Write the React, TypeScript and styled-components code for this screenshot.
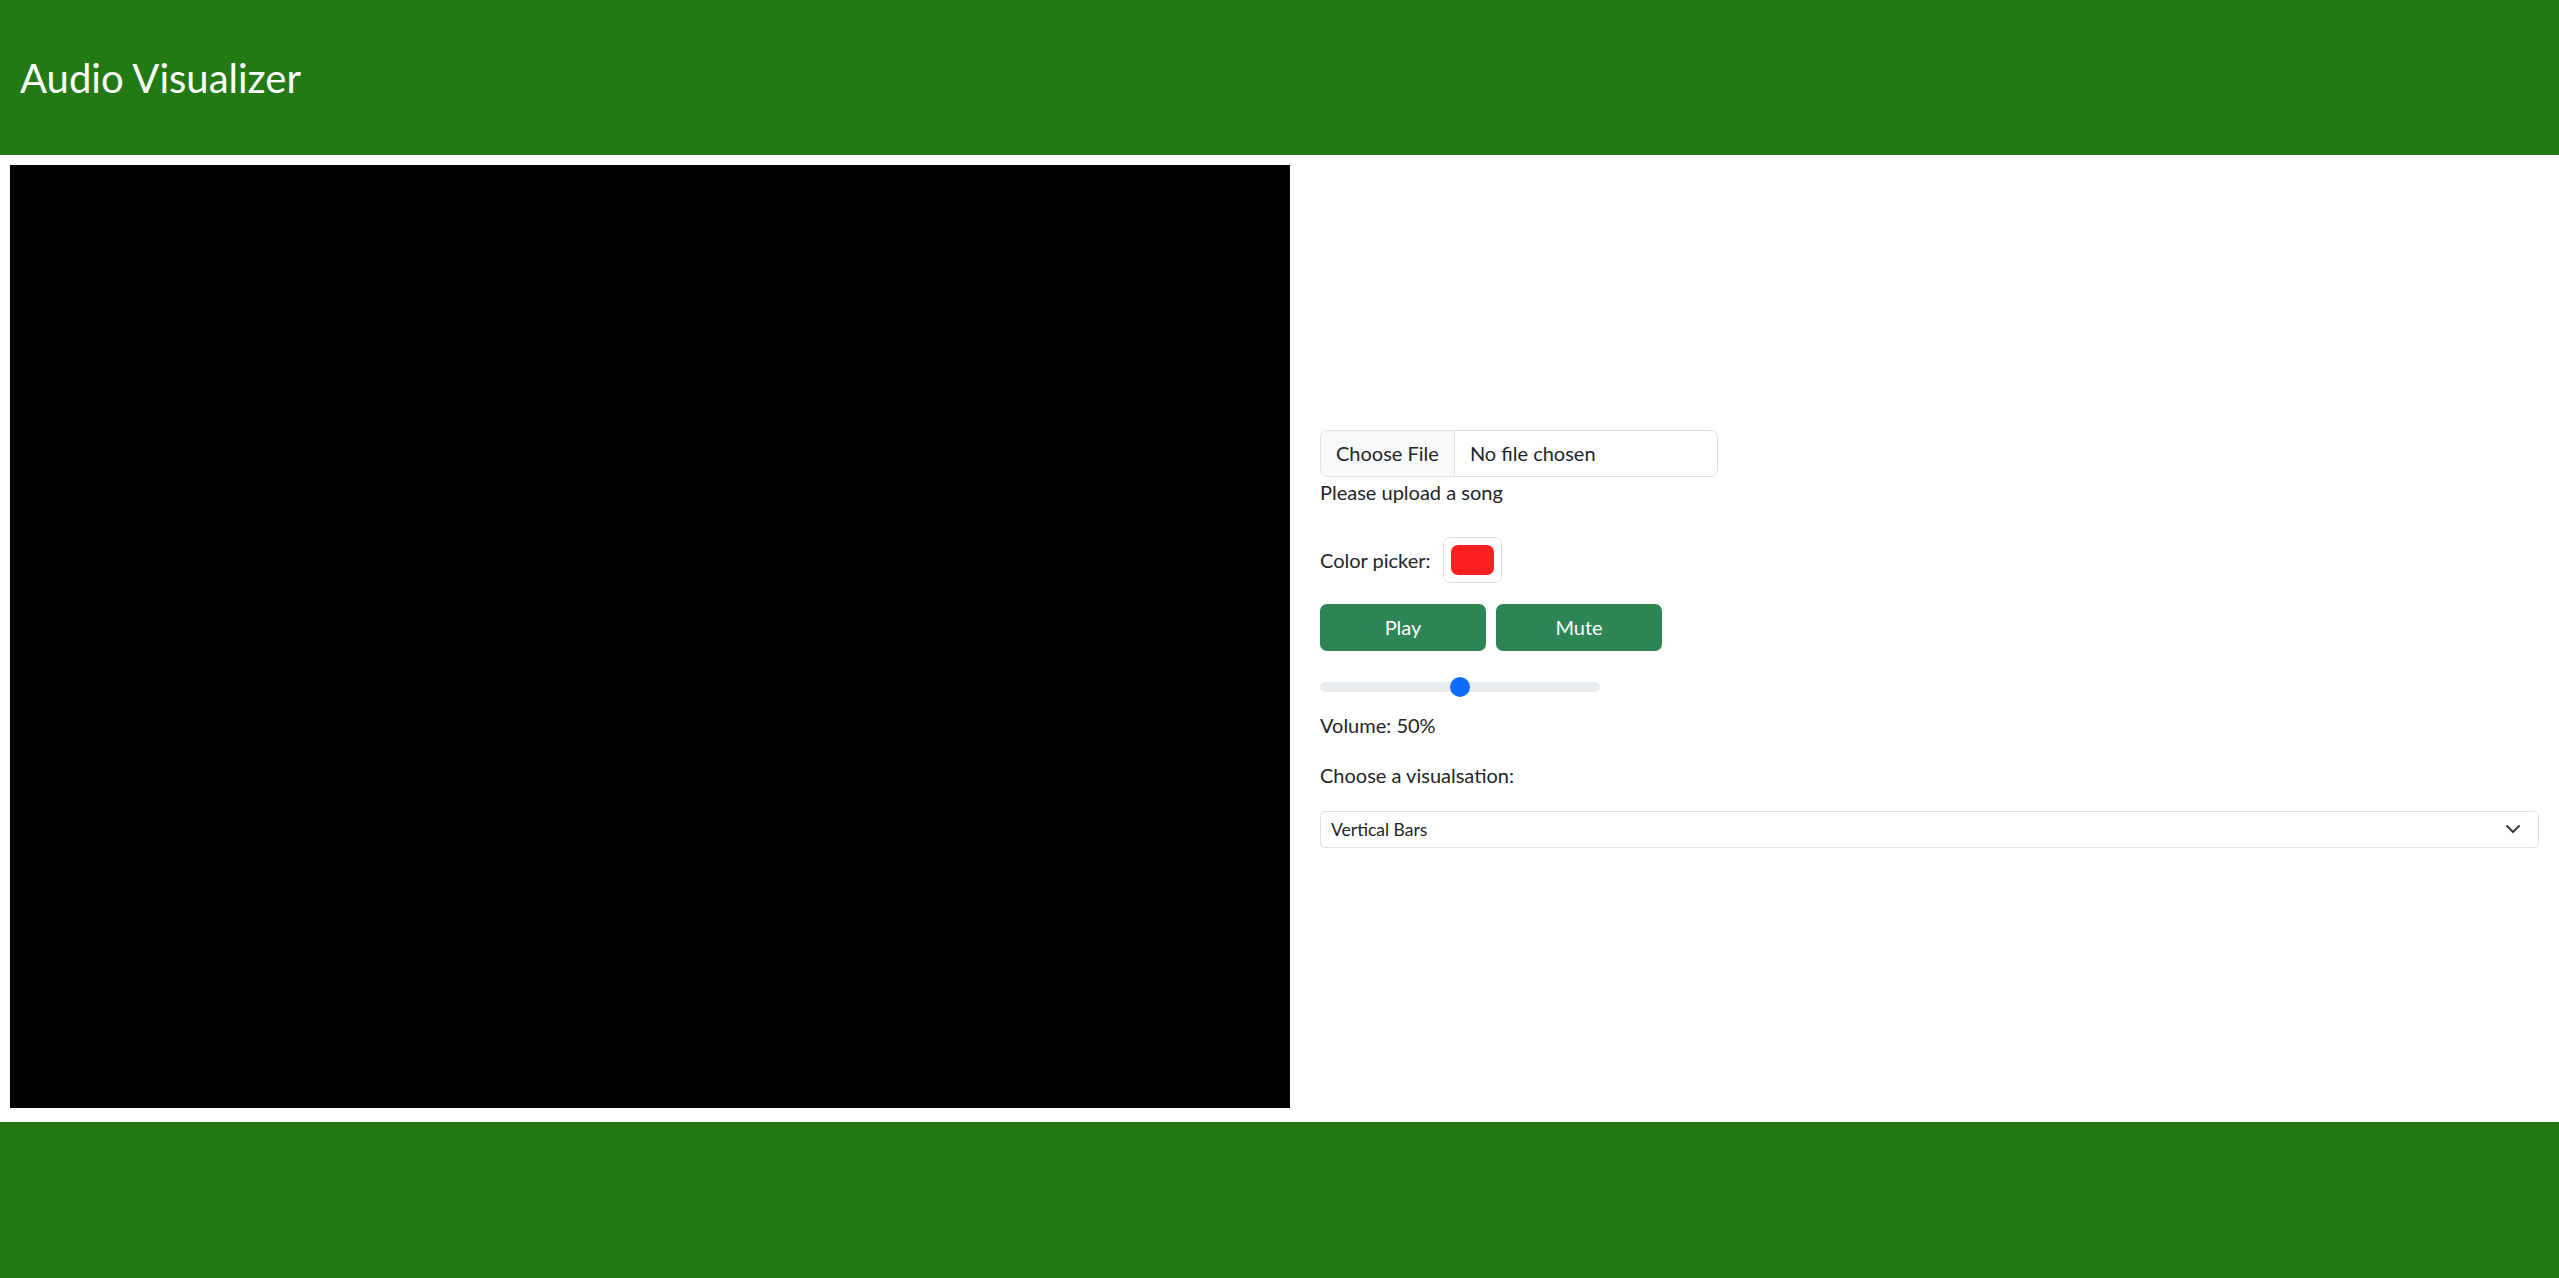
import React, { useState } from 'react';
import styled, { createGlobalStyle } from 'styled-components';

const GlobalStyle = createGlobalStyle`
  html, body {
    margin: 0;
    padding: 0;
    background: #fff;
  }
  body {
    font-family: Lato, 'Noto Sans', sans-serif;
    color: #212529;
    font-size: 20px;
    line-height: 1.5;
  }
  * {
    box-sizing: border-box;
  }
`;

const Page = styled.div`
  display: flex;
  flex-direction: column;
  height: 100vh;
`;

const Header = styled.header`
  height: 155px;
  background-color: #237a14;
  display: flex;
  align-items: center;
  padding-left: 20px;
  flex-shrink: 0;
`;

const Title = styled.h1`
  margin: 0;
  color: #fff;
  font-size: 40px;
  font-weight: 400;
  line-height: 1.2;
`;

const Main = styled.main`
  flex: 1;
  display: flex;
  align-items: flex-start;
  gap: 30px;
  padding: 10px 20px 14px 10px;
`;

const Canvas = styled.div`
  width: 1280px;
  height: 943px;
  background: #000;
  flex-shrink: 0;
`;

const Controls = styled.div`
  flex: 1;
  align-self: center;
  display: flex;
  flex-direction: column;
  align-items: flex-start;
  padding-top: 4px;
`;

const FileBox = styled.label`
  display: flex;
  width: 398px;
  height: 47px;
  border: 1px solid #dee2e6;
  border-radius: 7px;
  overflow: hidden;
  cursor: pointer;
  input {
    display: none;
  }
`;

const FileButton = styled.span`
  display: flex;
  align-items: center;
  padding: 0 15px;
  background: #f8f9fa;
  border-right: 1px solid #dee2e6;
`;

const FileName = styled.span`
  display: flex;
  align-items: center;
  padding: 0 15px;
`;

const Text = styled.div<{ $mb?: number }>`
  line-height: 30px;
  margin-bottom: ${(p) => p.$mb ?? 0}px;
`;

const Row = styled.div<{ $mb?: number; $gap?: number }>`
  display: flex;
  align-items: center;
  gap: ${(p) => p.$gap ?? 10}px;
  margin-bottom: ${(p) => p.$mb ?? 0}px;
`;

const ColorBox = styled.div`
  width: 59px;
  height: 46px;
  border: 1px solid #dee2e6;
  border-radius: 7px;
  padding: 7px;
  display: flex;
`;

const Swatch = styled.div<{ $color: string }>`
  flex: 1;
  background: ${(p) => p.$color};
  border-radius: 7px;
`;

const Button = styled.button`
  width: 166px;
  height: 47px;
  border: none;
  border-radius: 7px;
  background: #2e8555;
  color: #fff;
  font-family: inherit;
  font-size: 20px;
  cursor: pointer;
`;

const Range = styled.input`
  -webkit-appearance: none;
  appearance: none;
  width: 280px;
  height: 20px;
  margin: 0 0 13px;
  background: transparent;
  &::-webkit-slider-runnable-track {
    height: 10px;
    background: #e9ecef;
    border-radius: 10px;
  }
  &::-webkit-slider-thumb {
    -webkit-appearance: none;
    width: 20px;
    height: 20px;
    margin-top: -5px;
    border-radius: 50%;
    background: #0d6efd;
    border: none;
  }
`;

const SelectWrap = styled.div`
  position: relative;
  width: 100%;
  svg {
    position: absolute;
    right: 16px;
    top: 50%;
    transform: translateY(-50%);
    pointer-events: none;
  }
`;

const Select = styled.select`
  -webkit-appearance: none;
  appearance: none;
  width: 100%;
  height: 37px;
  padding: 0 40px 0 10px;
  border: 1px solid #dee2e6;
  border-radius: 5px;
  background: #fff;
  color: #212529;
  font-family: inherit;
  font-size: 17.5px;
`;

const Footer = styled.footer`
  height: 156px;
  background-color: #237a14;
  flex-shrink: 0;
`;

export default function App() {
  const [volume, setVolume] = useState(50);
  const [color] = useState('#f82020');

  return (
    <Page>
      <GlobalStyle />
      <Header>
        <Title>Audio Visualizer</Title>
      </Header>
      <Main>
        <Canvas />
        <Controls>
          <FileBox>
            <input type="file" accept="audio/*" />
            <FileButton>Choose File</FileButton>
            <FileName>No file chosen</FileName>
          </FileBox>
          <Text $mb={30}>Please upload a song</Text>
          <Row $mb={21} $gap={12}>
            <span>Color picker:</span>
            <ColorBox>
              <Swatch $color={color} />
            </ColorBox>
          </Row>
          <Row $mb={26}>
            <Button>Play</Button>
            <Button>Mute</Button>
          </Row>
          <Range
            type="range"
            min={0}
            max={100}
            value={volume}
            onChange={(e) => setVolume(Number(e.target.value))}
          />
          <Text $mb={20}>Volume: {volume}%</Text>
          <Text $mb={21}>Choose a visualsation:</Text>
          <SelectWrap>
            <Select defaultValue="bars">
              <option value="bars">Vertical Bars</option>
              <option value="circle">Circle</option>
              <option value="wave">Wave</option>
            </Select>
            <svg width="20" height="16" viewBox="0 0 16 16" fill="none">
              <path d="M2 5l6 6 6-6" stroke="#343a40" strokeWidth="2" strokeLinecap="round" strokeLinejoin="round" />
            </svg>
          </SelectWrap>
        </Controls>
      </Main>
      <Footer />
    </Page>
  );
}
